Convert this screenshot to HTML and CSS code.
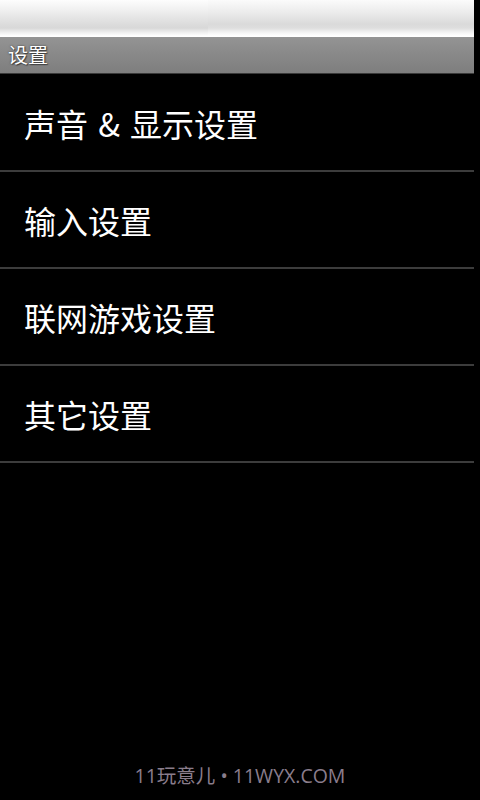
FILE: index.html
```html
<!DOCTYPE html>
<html lang="zh">
<head>
<meta charset="utf-8">
<title>设置</title>
<link rel="stylesheet" href="styles.css">
</head>
<body>
<div class="screen">
  <div class="status">
    <div class="status-left"></div>
    <div class="status-right"></div>
  </div>
  <div class="titlebar"><span class="title">设置</span></div>
  <ul class="list">
    <li class="item">声音 &amp; 显示设置</li>
    <li class="item">输入设置</li>
    <li class="item">联网游戏设置</li>
    <li class="item">其它设置</li>
  </ul>
  <div class="watermark">11玩意儿 • 11WYX.COM</div>
</div>
</body>
</html>
```
FILE: styles.css
```css
html, body {
  margin: 0;
  padding: 0;
  background: #000;
}
.screen {
  width: 480px;
  height: 800px;
  display: flex;
  flex-direction: column;
  background: #000;
  font-family: "Noto Sans CJK SC", "Noto Sans", sans-serif;
  color: #fff;
}
.status {
  width: 474px;
  height: 37px;
  display: flex;
}
.status-left {
  width: 208px;
  background: linear-gradient(to bottom, #fdfdfd 0px, #f0f0f0 10px, #dcdcdc 24px, #d8d8d8 28px, #f2f2f2 33px, #ffffff 36px, #ffffff 37px);
}
.status-right {
  flex: 1;
  background: linear-gradient(to bottom, #fbfbfb 0px, #ececec 12px, #dadada 24px, #dedede 28px, #f6f6f6 33px, #ffffff 36px, #ffffff 37px);
}
.titlebar {
  width: 474px;
  height: 36px;
  display: flex;
  align-items: center;
  background: linear-gradient(to bottom, #949494 0px, #8c8c8c 12px, #7e7e7e 36px);
  border-bottom: 1px solid #3a3a3a;
}
.title {
  padding-left: 8px;
  font-size: 20px;
  line-height: 1;
  color: #fff;
  text-shadow: 0 0 2px #333, 1px 1px 1px #444;
}
.list {
  list-style: none;
  margin: 0;
  padding: 1px 0 0;
  width: 474px;
}
.item {
  display: flex;
  align-items: center;
  padding-left: 24px;
  padding-top: 0;
  box-sizing: border-box;
  height: 97px;
  font-size: 32px;
  line-height: 1;
  word-spacing: 3px;
  color: #fff;
  border-bottom: 2px solid #3c3c3c;
}
.watermark {
  margin-top: auto;
  margin-bottom: 11px;
  text-align: center;
  font-family: "Open Sans", "Noto Sans CJK SC", sans-serif;
  font-size: 19.5px;
  color: #8a7d8c;
}
```
